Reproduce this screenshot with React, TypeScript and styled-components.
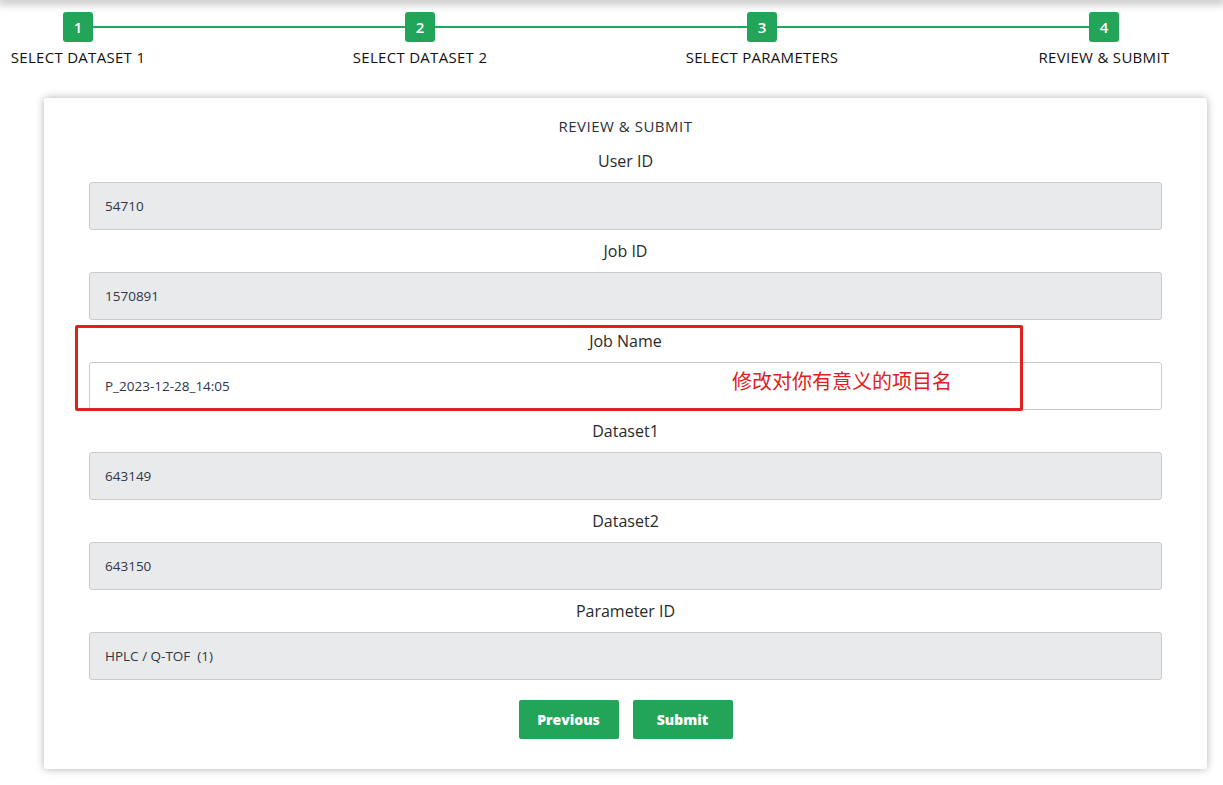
import React from "react";
import styled, { createGlobalStyle } from "styled-components";

const Global = createGlobalStyle`
  html, body { margin: 0; padding: 0; background: #fff; }
  body { font-family: "Open Sans", "Noto Sans", "Noto Sans CJK SC", sans-serif; color: #1f1f1f; }
  * { box-sizing: border-box; }
`;

const GREEN = "#22a559";

const Page = styled.div`
  width: 1223px;
  min-height: 785px;
  position: relative;
  overflow: hidden;
`;

const TopShadow = styled.div`
  height: 0;
  box-shadow: 0 0 10px 3px rgba(0, 0, 0, 0.35);
`;

const Stepper = styled.div`
  position: relative;
  display: flex;
  justify-content: space-between;
  width: 1166px;
  margin: 12px 0 0 8px;
  &::before {
    content: "";
    position: absolute;
    left: 70px;
    right: 70px;
    top: 14px;
    height: 2px;
    background: ${GREEN};
  }
`;

const Step = styled.div`
  position: relative;
  width: 140px;
  display: flex;
  flex-direction: column;
  align-items: center;
`;

const StepBox = styled.div`
  width: 30px;
  height: 30px;
  border-radius: 3px;
  background: ${GREEN};
  color: #fff;
  font-size: 15px;
  font-weight: 600;
  display: flex;
  align-items: center;
  justify-content: center;
`;

const StepLabel = styled.div`
  margin-top: 5px;
  font-size: 15px;
  line-height: 20px;
  white-space: nowrap;
  color: #111;
  letter-spacing: 0.3px;
`;

const Card = styled.div`
  margin: 31px 0 0 44px;
  width: 1163px;
  height: 671px;
  background: #fff;
  border-radius: 3px;
  box-shadow: 0 0 9px rgba(0, 0, 0, 0.3);
  padding: 17px 45px 0;
  display: flex;
  flex-direction: column;
  align-items: stretch;
`;

const Title = styled.div`
  text-align: center;
  font-size: 15px;
  letter-spacing: 0.5px;
  color: #2a2f35;
  height: 22px;
  line-height: 22px;
  margin-bottom: 3px;
`;

const Field = styled.div`
  position: relative;
  height: 90px;
  display: flex;
  flex-direction: column;
`;

const Label = styled.div`
  text-align: center;
  font-size: 16px;
  color: #2a2a2a;
  height: 42px;
  line-height: 42px;
`;

const Input = styled.div<{ $editable?: boolean }>`
  height: 48px;
  border: 1px solid #c9cacc;
  border-radius: 3px;
  background: ${(p) => (p.$editable ? "#fff" : "#e9eaec")};
  padding: 0 15px;
  display: flex;
  align-items: center;
  font-size: 13.5px;
  color: #2d3748;
  white-space: pre;
`;

const Highlight = styled.div`
  position: absolute;
  left: -14px;
  top: 5px;
  width: 948px;
  height: 86px;
  border: 3px solid #e0201c;
  border-radius: 2px;
  pointer-events: none;
`;

const Note = styled.div`
  position: absolute;
  left: 643px;
  top: 46px;
  font-size: 20px;
  line-height: 30px;
  color: #e0201c;
  font-family: "Noto Sans CJK SC", sans-serif;
`;

const Buttons = styled.div`
  display: flex;
  justify-content: center;
  gap: 14px;
  margin-top: 20px;
`;

const Button = styled.button`
  width: 100px;
  height: 39px;
  border: none;
  border-radius: 2px;
  background: ${GREEN};
  color: #fff;
  font-family: "Open Sans", sans-serif;
  font-weight: 800;
  font-size: 14px;
  padding: 0;
  cursor: pointer;
`;

const fields: { label: string; value: string; editable?: boolean; note?: boolean }[] = [
  { label: "User ID", value: "54710" },
  { label: "Job ID", value: "1570891" },
  { label: "Job Name", value: "P_2023-12-28_14:05", editable: true, note: true },
  { label: "Dataset1", value: "643149" },
  { label: "Dataset2", value: "643150" },
  { label: "Parameter ID", value: "HPLC / Q-TOF  (1)" },
];

const steps = ["SELECT DATASET 1", "SELECT DATASET 2", "SELECT PARAMETERS", "REVIEW & SUBMIT"];

export default function App() {
  return (
    <Page>
      <Global />
      <TopShadow />
      <Stepper>
        {steps.map((s, i) => (
          <Step key={s}>
            <StepBox>{i + 1}</StepBox>
            <StepLabel>{s}</StepLabel>
          </Step>
        ))}
      </Stepper>
      <Card>
        <Title>REVIEW &amp; SUBMIT</Title>
        {fields.map((f) => (
          <Field key={f.label}>
            <Label>{f.label}</Label>
            <Input $editable={f.editable}>{f.value}</Input>
            {f.note && (
              <>
                <Highlight />
                <Note>修改对你有意义的项目名</Note>
              </>
            )}
          </Field>
        ))}
        <Buttons>
          <Button>Previous</Button>
          <Button>Submit</Button>
        </Buttons>
      </Card>
    </Page>
  );
}
